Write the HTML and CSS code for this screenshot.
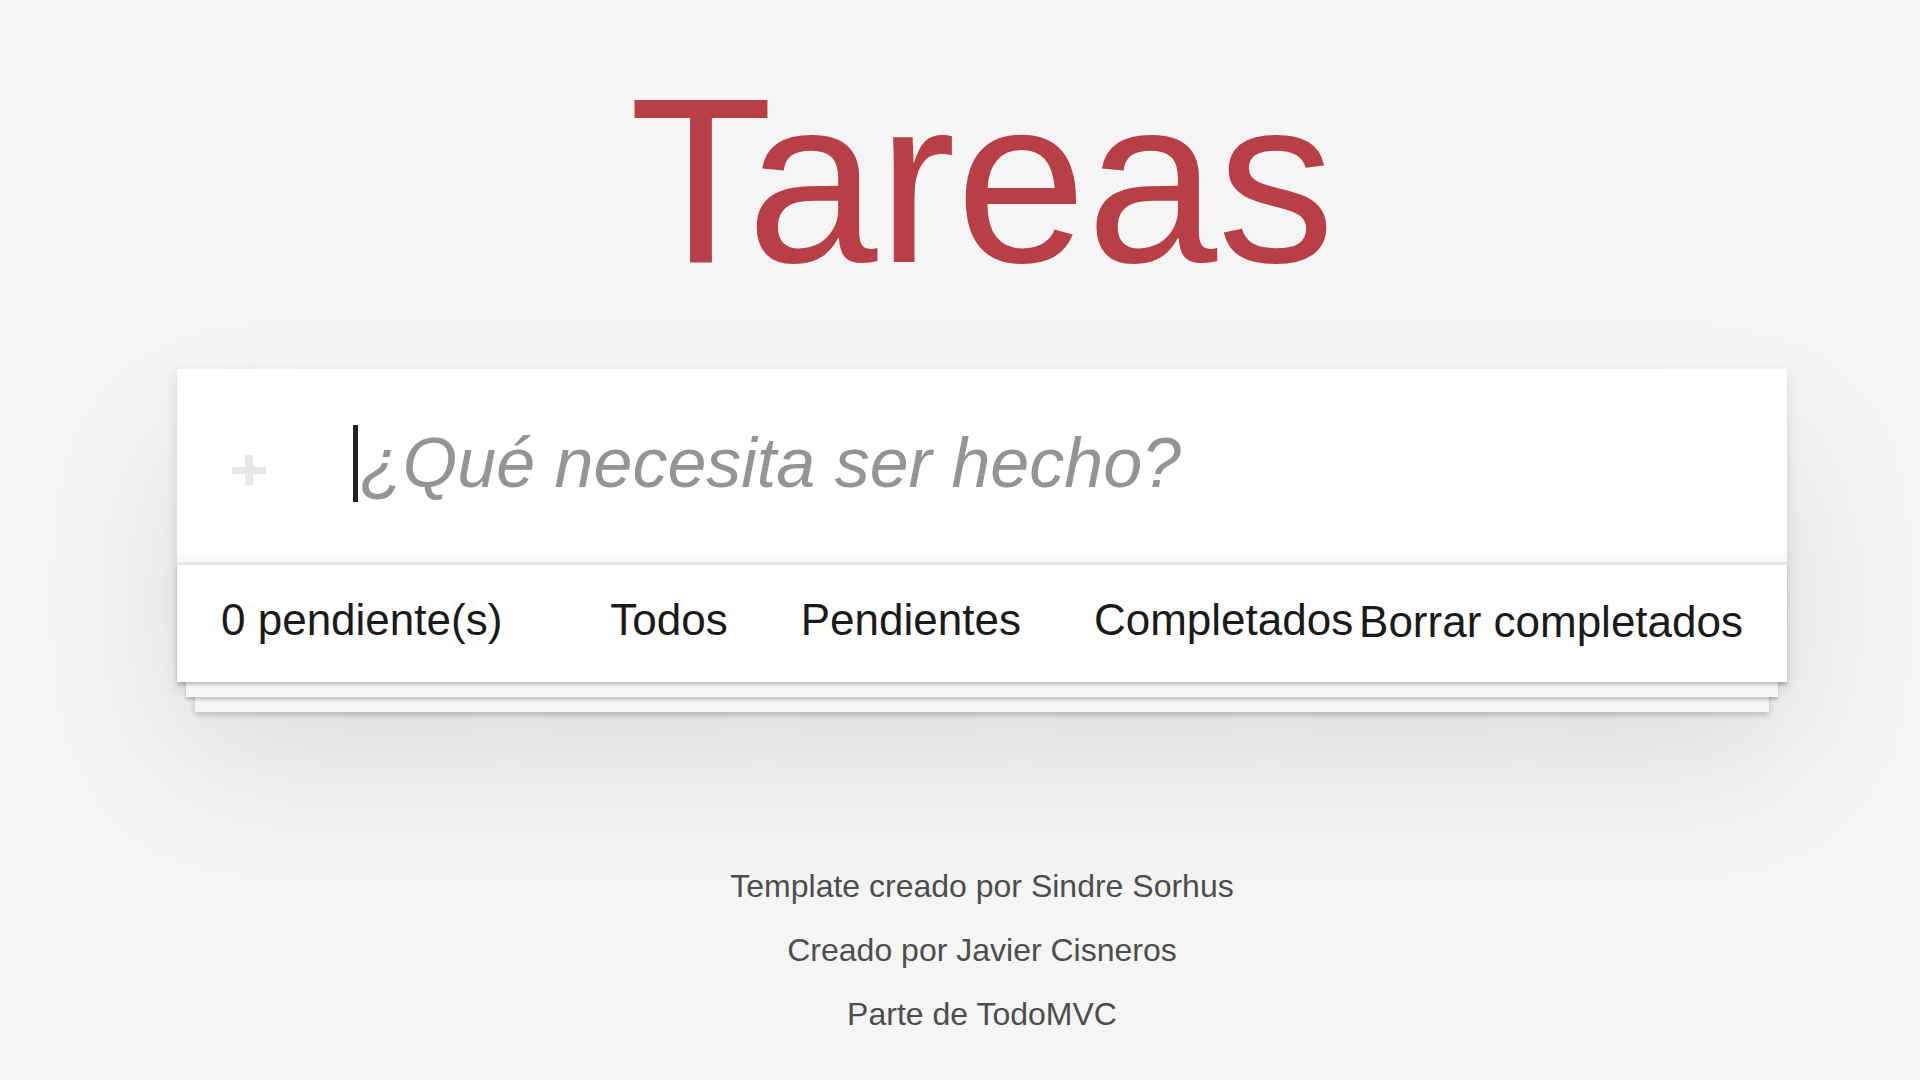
FILE: index.html
```html
<!DOCTYPE html>
<html lang="es">

<head>
  <meta charset="UTF-8">
  <title>Tareas</title>
  <link rel="stylesheet" href="styles.css">
</head>

<body>
  <section class="todoapp">
    <header class="header">
      <h1>Tareas</h1>
    </header>

    <div class="card">
      <div class="new-todo-row">
        <svg class="toggle-all" width="34" height="30" viewBox="0 0 34 30">
          <rect x="0" y="12" width="34" height="7" fill="#e6e6e6" />
          <rect x="13" y="0" width="8" height="30" fill="#e6e6e6" />
        </svg>
        <span class="caret"></span>
        <input class="new-todo" type="text" placeholder="¿Qué necesita ser hecho?">
      </div>

      <footer class="footer">
        <span class="todo-count">0 pendiente(s)</span>
        <ul class="filters">
          <li><a href="#/">Todos</a></li>
          <li><a href="#/active">Pendientes</a></li>
          <li><a href="#/completed">Completados</a></li>
        </ul>
        <button class="clear-completed">Borrar completados</button>
      </footer>
    </div>
  </section>

  <footer class="info">
    <p>Template creado por Sindre Sorhus</p>
    <p>Creado por Javier Cisneros</p>
    <p>Parte de TodoMVC</p>
  </footer>
</body>

</html>
```

FILE: styles.css
```css
html,
body {
  margin: 0;
  padding: 0;
}

body {
  padding-left: 44px;
  background: #f5f5f5;
  color: #111;
  font-family: "Liberation Sans", Arial, sans-serif;
}

.todoapp {
  width: 1610px;
  margin: 0 auto;
}

.header h1 {
  margin: 63px 0 71px;
  font-size: 235px;
  font-weight: normal;
  line-height: 235px;
  text-align: center;
  color: #b83f45;
}

.card {
  background: #fff;
  box-shadow: 0 6px 12px rgba(0, 0, 0, 0.12), 0 75px 150px rgba(0, 0, 0, 0.1);
}

.new-todo-row {
  display: flex;
  align-items: center;
  height: 77px;
  padding: 56px 0 60px 55px;
  box-shadow: inset 0 -9px 6px rgba(0, 0, 0, 0.03);
}

.toggle-all {
  flex: none;
  margin: 13px 87px 0 0;
}

.caret {
  flex: none;
  width: 5px;
  height: 77px;
  background: #222;
}

.new-todo {
  flex: 1;
  min-width: 0;
  margin: 0;
  padding: 0 0 0 2px;
  border: none;
  outline: none;
  background: transparent;
  font-family: "Liberation Sans", Arial, sans-serif;
  font-size: 70px;
  line-height: 77px;
  height: 77px;
  color: #111;
}

.new-todo::placeholder {
  font-style: italic;
  color: #949494;
}

.footer {
  display: flex;
  align-items: flex-start;
  height: 117px;
  padding: 0 44px;
  border-top: 3px solid #e6e6e6;
  background: #fff;
  font-size: 44px;
  line-height: 110px;
  color: #1a1a1a;
  box-shadow: 0 3px 3px rgba(0, 0, 0, 0.2),
    0 24px 0 -9px #f6f6f6,
    0 27px 3px -9px rgba(0, 0, 0, 0.2),
    0 48px 0 -18px #f6f6f6,
    0 51px 6px -18px rgba(0, 0, 0, 0.2);
}

.todo-count {
  flex: none;
}

.filters {
  display: flex;
  gap: 73px;
  margin: 0 0 0 108px;
  padding: 0;
  list-style: none;
}

.filters a {
  color: inherit;
  text-decoration: none;
}

.clear-completed {
  margin: 0 0 0 auto;
  padding: 2px 0 0;
  border: none;
  background: none;
  font: inherit;
  line-height: 110px;
  color: inherit;
  white-space: nowrap;
}

.info {
  margin-top: 172px;
  text-align: center;
  font-size: 32px;
  color: #4d4d4d;
}

.info p {
  margin: 0;
  line-height: 64px;
}
```
